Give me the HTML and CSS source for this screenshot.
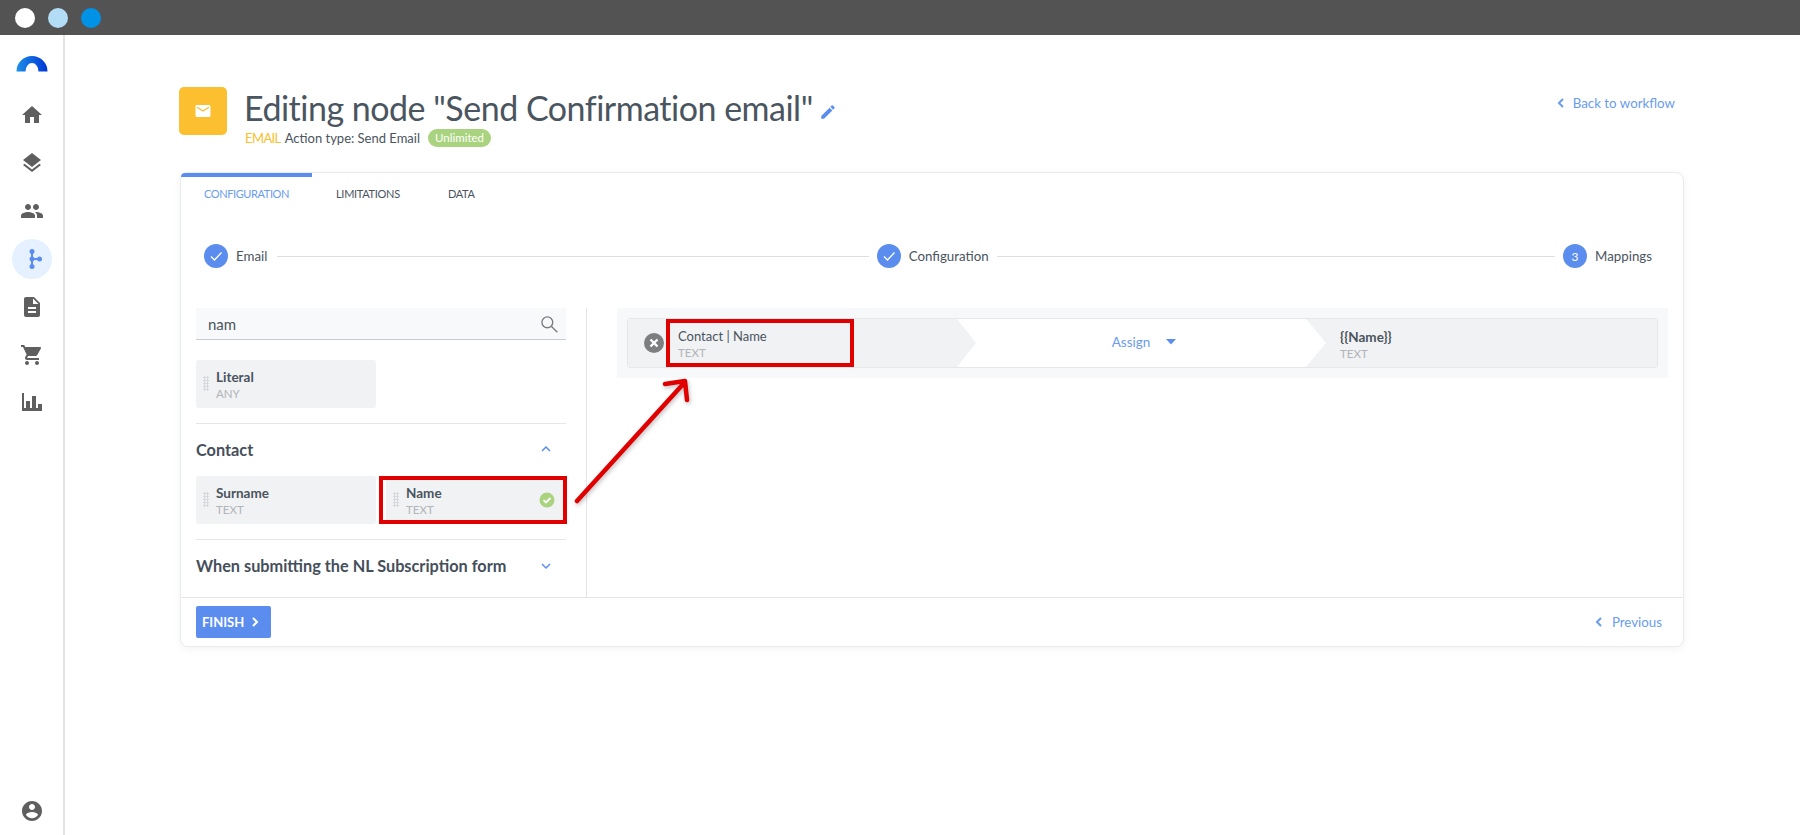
FILE: index.html
```html
<!DOCTYPE html>
<html lang="en">
<head>
    <meta charset="UTF-8">
    <title>Editing node</title>
    <link rel="stylesheet" href="styles.css">
</head>
<body>
    <div class="window-bar">
        <span class="dot dot-white"></span>
        <span class="dot dot-light"></span>
        <span class="dot dot-blue"></span>
    </div>
    <div class="app">
        <nav class="sidebar">
            <div class="logo">
                <svg width="32" height="17" viewBox="0 0 32 17">
                    <defs>
                        <linearGradient id="logoGrad" x1="0" x2="1" y1="0" y2="0">
                            <stop offset="0" stop-color="#1d8fe8"/>
                            <stop offset="1" stop-color="#0036d6"/>
                        </linearGradient>
                    </defs>
                    <path fill="url(#logoGrad)" d="M0.5 16.5A15.5 15.5 0 0 1 31.500 16.500H22.500A6.500 8.500 0 0 0 9.500 16.500Z"/>
                </svg>
            </div>
            <a class="nav-item"><svg viewBox="0 0 24 24"><path d="M10 20v-6h4v6h5v-8h3L12 3 2 12h3v8z"/></svg></a>
            <a class="nav-item"><svg viewBox="0 0 24 24"><path d="M11.990 18.540l-7.370-5.730L3 14.070l9 7 9-7-1.630-1.270-7.380 5.740zM12 16l7.360-5.730L21 9l-9-7-9 7 1.630 1.270L12 16z"/></svg></a>
            <a class="nav-item"><svg viewBox="0 0 24 24"><path d="M16 11c1.660 0 2.990-1.340 2.990-3S17.660 5 16 5c-1.660 0-3 1.340-3 3s1.340 3 3 3zm-8 0c1.660 0 2.990-1.340 2.990-3S9.660 5 8 5C6.340 5 5 6.340 5 8s1.340 3 3 3zm0 2c-2.330 0-7 1.170-7 3.500V19h14v-2.500c0-2.330-4.670-3.500-7-3.500zm8 0c-.29 0-.62.02-.97.05 1.160.84 1.970 1.970 1.970 3.450V19h6v-2.500c0-2.330-4.670-3.500-7-3.500z"/></svg></a>
            <a class="nav-item nav-active">
                <span class="nav-circle">
                    <svg viewBox="0 0 24 24"><path class="flow-line" d="M12 4v16M12 12h8"/><circle cx="12" cy="4.500" r="2.500"/><circle cx="12" cy="12" r="2.500"/><circle cx="12" cy="19.500" r="2.500"/><circle cx="19.500" cy="12" r="2.500"/></svg>
                </span>
            </a>
            <a class="nav-item"><svg viewBox="0 0 24 24"><path d="M14 2H6c-1.100 0-1.990.9-1.990 2L4 20c0 1.100.89 2 1.990 2H18c1.100 0 2-.9 2-2V8l-6-6zm2 16H8v-2h8v2zm0-4H8v-2h8v2zm-3-5V3.500L18.500 9H13z"/></svg></a>
            <a class="nav-item"><svg viewBox="0 0 24 24"><path d="M7 18c-1.100 0-1.990.9-1.990 2S5.900 22 7 22s2-.9 2-2-.9-2-2-2zM1 2v2h2l3.600 7.590-1.350 2.450c-.16.28-.25.61-.25.96 0 1.100.9 2 2 2h12v-2H7.420c-.14 0-.25-.11-.25-.25l.03-.12.9-1.630h7.450c.75 0 1.410-.41 1.750-1.030l3.580-6.490c.08-.14.12-.31.12-.48 0-.55-.45-1-1-1H5.210l-.94-2H1zm16 16c-1.100 0-1.990.9-1.990 2s.89 2 1.990 2 2-.9 2-2-.9-2-2-2z"/></svg></a>
            <a class="nav-item"><svg viewBox="0 0 24 24"><path d="M2 2h2v15h2v-7h4v7h2V5h4v12h2v-4h4v7H2z"/></svg></a>
            <a class="nav-item nav-account"><svg viewBox="0 0 24 24"><path d="M12 2C6.480 2 2 6.480 2 12s4.480 10 10 10 10-4.480 10-10S17.520 2 12 2zm0 3c1.660 0 3 1.340 3 3s-1.340 3-3 3-3-1.340-3-3 1.340-3 3-3zm0 14.200c-2.500 0-4.710-1.280-6-3.220.03-1.990 4-3.080 6-3.080 1.990 0 5.970 1.090 6 3.080-1.290 1.940-3.500 3.220-6 3.220z"/></svg></a>
        </nav>

        <main class="main">
            <header class="page-head">
                <div class="node-icon">
                    <svg viewBox="0 0 24 24"><path d="M20 4H4c-1.100 0-1.990.9-1.990 2L2 18c0 1.100.9 2 2 2h16c1.100 0 2-.9 2-2V6c0-1.100-.9-2-2-2zm0 4l-8 5-8-5V6l8 5 8-5v2z"/></svg>
                </div>
                <div class="head-text">
                    <h1 class="title">Editing node "Send Confirmation email"
                        <svg class="pencil" viewBox="0 0 24 24"><path d="M3 17.250V21h3.750L17.810 9.940l-3.750-3.750L3 17.250zM20.710 7.040c.39-.39.39-1.020 0-1.410l-2.340-2.340c-.39-.39-1.020-.39-1.410 0l-1.830 1.830 3.750 3.750 1.830-1.830z"/></svg>
                    </h1>
                    <div class="subtitle">
                        <span class="type-name">EMAIL</span>
                        <span>Action type: Send Email</span>
                        <span class="badge">Unlimited</span>
                    </div>
                </div>
                <a class="back-link">
                    <svg class="chev" viewBox="0 0 10 12"><path d="M7 2L3 6l4 4"/></svg>
                    Back to workflow
                </a>
            </header>

            <section class="card">
                <div class="tabs">
                    <div class="tab tab-active">CONFIGURATION</div>
                    <div class="tab">LIMITATIONS</div>
                    <div class="tab">DATA</div>
                </div>

                <div class="stepper">
                    <div class="step">
                        <span class="step-num"><svg viewBox="0 0 24 24"><path d="M7 12.500l3.500 3.500L17.500 8.500"/></svg></span>
                        <span>Email</span>
                    </div>
                    <div class="step-line line-a"></div>
                    <div class="step">
                        <span class="step-num"><svg viewBox="0 0 24 24"><path d="M7 12.500l3.500 3.500L17.500 8.500"/></svg></span>
                        <span>Configuration</span>
                    </div>
                    <div class="step-line line-b"></div>
                    <div class="step">
                        <span class="step-num">3</span>
                        <span>Mappings</span>
                    </div>
                </div>

                <div class="workspace">
                    <div class="fields">
                        <div class="search">
                            <span>nam</span>
                            <svg viewBox="0 0 24 24"><circle cx="10" cy="10" r="6.500"/><path d="M15 15l7 7"/></svg>
                        </div>
                        <div class="chip-row">
                            <div class="chip">
                                <span class="grip"></span>
                                <div>
                                    <div class="chip-name">Literal</div>
                                    <div class="chip-type">ANY</div>
                                </div>
                            </div>
                        </div>
                        <div class="group-title">
                            <span>Contact</span>
                            <svg class="toggle" viewBox="0 0 12 8"><path d="M2 6l4-4 4 4"/></svg>
                        </div>
                        <div class="chip-row">
                            <div class="chip">
                                <span class="grip"></span>
                                <div>
                                    <div class="chip-name">Surname</div>
                                    <div class="chip-type">TEXT</div>
                                </div>
                            </div>
                            <div class="picked">
                                <div class="chip">
                                    <span class="grip"></span>
                                    <div>
                                        <div class="chip-name">Name</div>
                                        <div class="chip-type">TEXT</div>
                                    </div>
                                    <svg class="used" viewBox="0 0 16 16"><circle cx="8" cy="8" r="7.500"/><path d="M4.500 8.200l2.500 2.300 4.500-4.500"/></svg>
                                </div>
                            </div>
                        </div>
                        <div class="group-title group-next">
                            <span>When submitting the NL Subscription form</span>
                            <svg class="toggle" viewBox="0 0 12 8"><path d="M2 2l4 4 4-4"/></svg>
                        </div>
                    </div>

                    <div class="mappings">
                        <div class="map-band">
                            <div class="map-row">
                                <div class="map-source">
                                    <svg class="remove" viewBox="0 0 20 20"><circle cx="10" cy="10" r="10"/><path d="M6.500 6.500l7 7M13.500 6.500l-7 7"/></svg>
                                    <div class="source-box">
                                        <div class="source-name">Contact | Name</div>
                                        <div class="chip-type">TEXT</div>
                                    </div>
                                </div>
                                <div class="map-action">
                                    <span>Assign</span>
                                    <svg class="caret" viewBox="0 0 10 6"><path d="M0 0h10L5 5.500z"/></svg>
                                </div>
                                <div class="map-target">
                                    <div class="chip-name">{{Name}}</div>
                                    <div class="chip-type">TEXT</div>
                                </div>
                            </div>
                        </div>
                    </div>
                </div>

                <footer class="card-foot">
                    <button class="finish">FINISH <svg class="chev" viewBox="0 0 10 12"><path d="M3 2l4 4-4 4"/></svg></button>
                    <a class="prev-link">
                        <svg class="chev" viewBox="0 0 10 12"><path d="M7 2L3 6l4 4"/></svg>
                        Previous
                    </a>
                </footer>
            </section>
        </main>
    </div>

    <!-- red callout drawn over the page -->
    <svg class="callout" viewBox="0 0 1800 835">
        <path d="M577 501L685 382M665 384L685 381L687 400"/>
    </svg>
</body>
</html>
```

FILE: styles.css
```css
* {
    box-sizing: border-box;
}
html, body {
    height: 100%;
}
body {
    margin: 0;
    overflow: hidden;
    position: relative;
    background: #fff;
    color: #4a545e;
    font-family: Lato, "Noto Sans", sans-serif;
    font-size: 14px;
}
svg {
    display: block;
}

.window-bar {
    height: 35px;
    background: #535353;
    display: flex;
    align-items: center;
    gap: 13px;
    padding-left: 15px;
}
.dot {
    width: 20px;
    height: 20px;
    border-radius: 50%;
}
.dot-white { background: #fff; }
.dot-light { background: #b3dcf6; }
.dot-blue { background: #0092e6; }

.app {
    display: flex;
    height: 800px;
}

.sidebar {
    width: 65px;
    flex-shrink: 0;
    border-right: 2px solid #e4e4e4;
    display: flex;
    flex-direction: column;
    align-items: stretch;
}
.logo {
    height: 56px;
    padding: 20px 0 0 16px;
}
.nav-item {
    height: 48px;
    display: flex;
    align-items: center;
    justify-content: center;
    padding-left: 1px;
}
.nav-item svg {
    width: 24px;
    height: 24px;
    fill: #5f5f5f;
}
.nav-circle {
    width: 40px;
    height: 40px;
    border-radius: 50%;
    background: #e5f1fe;
    display: flex;
    align-items: center;
    justify-content: center;
}
.nav-active svg {
    fill: #5b8def;
}
.flow-line {
    fill: none;
    stroke: #5b8def;
    stroke-width: 2;
}
.nav-account {
    margin-top: auto;
}

.main {
    flex: 1;
    padding: 52px 0 0 115px;
    width: 1504px;
}

.page-head {
    display: flex;
    width: 1504px;
    height: 60px;
}
.node-icon {
    width: 48px;
    height: 48px;
    border-radius: 5px;
    background: #fbbf2f;
    display: flex;
    align-items: center;
    justify-content: center;
    margin-left: -1px;
}
.node-icon svg {
    width: 18px;
    height: 18px;
    fill: #fff;
}
.head-text {
    margin-left: 17px;
}
.title {
    margin: 0;
    font-size: 34px;
    letter-spacing: -0.5px;
    line-height: 41px;
    font-weight: 400;
    color: #4a5560;
    display: flex;
    align-items: center;
}
.pencil {
    width: 18px;
    height: 18px;
    fill: #5b8def;
    margin: 8px 0 0 6px;
}
.subtitle {
    display: flex;
    align-items: center;
    height: 19px;
    gap: 4px;
    font-size: 13px;
    padding-left: 1px;
}
.type-name {
    color: #fbbf2f;
    letter-spacing: -0.6px;
}
.badge {
    margin-left: 4px;
    height: 18px;
    line-height: 18px;
    padding: 0 7px;
    border-radius: 9px;
    background: #a9d37e;
    color: #fff;
    font-size: 11.500px;
}
.back-link, .prev-link {
    color: #6a9cf0;
    display: flex;
    align-items: center;
    gap: 7px;
    font-size: 13.300px;
}
.back-link {
    margin-left: auto;
    height: 18px;
    margin-top: 7px;
    margin-right: 9px;
}
.chev {
    width: 10px;
    height: 12px;
    fill: none;
    stroke: currentColor;
    stroke-width: 2;
}

.card {
    width: 1504px;
    height: 475px;
    margin-top: 25px;
    border: 1px solid #e9ebed;
    border-radius: 8px;
    box-shadow: 0 2px 8px rgba(0, 0, 0, 0.05);
    background: #fff;
    display: flex;
    flex-direction: column;
}

.tabs {
    display: flex;
    height: 38px;
}
.tab {
    padding: 0 24px;
    line-height: 34px;
    border-top: 4px solid transparent;
    font-size: 11px;
    letter-spacing: -0.3px;
    color: #4a545e;
}
.tab-active {
    color: #6a9cf0;
    border-top-color: #5b8def;
    border-radius: 4px 0 4px 0;
    width: 131px;
    padding-left: 23px;
    letter-spacing: -0.4px;
}

.stepper {
    display: flex;
    align-items: center;
    height: 24px;
    margin-top: 33px;
    padding: 0 31px 0 23px;
    font-size: 13.300px;
}
.step {
    display: flex;
    align-items: center;
    gap: 8px;
}
.step-num {
    width: 24px;
    height: 24px;
    border-radius: 50%;
    background: #5b8def;
    color: #fff;
    font-size: 12px;
    display: flex;
    align-items: center;
    justify-content: center;
}
.step-num svg {
    width: 24px;
    height: 24px;
    fill: none;
    stroke: #fff;
    stroke-width: 1.300;
}
.step-line {
    height: 1px;
    background: #dcdee0;
    margin: 0 8px;
}
.line-a { flex: 592; margin-left: 10px; }
.line-b { flex: 559; }

.workspace {
    display: flex;
    height: 290px;
    margin-top: 40px;
    border-bottom: 1px solid #e4e5e7;
}
.fields {
    width: 406px;
    flex-shrink: 0;
    padding: 0 20px 0 15px;
    border-right: 1px solid #e4e5e7;
}
.search {
    height: 32px;
    background: #f8f9fa;
    border-bottom: 1px solid #c9ced4;
    display: flex;
    align-items: center;
    justify-content: space-between;
    padding: 0 7px 0 12px;
    font-size: 15px;
}
.search svg {
    width: 20px;
    height: 20px;
    fill: none;
    stroke: #767b80;
    stroke-width: 1.600;
}
.chip-row {
    display: grid;
    grid-template-columns: 180px 188px;
    column-gap: 3px;
    margin-top: 20px;
    padding-bottom: 15px;
    border-bottom: 1px solid #e4e5e7;
}
.group-title + .chip-row {
    margin-top: 0;
}
.chip {
    height: 48px;
    background: #f1f2f4;
    border-radius: 3px;
    display: flex;
    align-items: flex-start;
    padding: 9px 0 0 7px;
    position: relative;
}
.grip {
    width: 6px;
    height: 15px;
    margin: 7px 7px 0 0;
    background-image: radial-gradient(circle, #d6d8db 1px, transparent 1.200px);
    background-size: 3px 3px;
}
.chip-name {
    font-size: 13.500px;
    font-weight: 700;
    line-height: 16px;
    color: #4a545e;
}
.chip-type {
    font-size: 11.500px;
    line-height: 16px;
    margin-top: 1px;
    color: #b1b4b8;
}
.picked {
    width: 188px;
    height: 48px;
    border: 4px solid #e00000;
    padding-left: 3px;
    background: #fff;
}
.picked .chip {
    height: 40px;
    border-radius: 0;
    padding-top: 5px;
}
.used {
    width: 16px;
    height: 16px;
    margin: 7px 8px 0 auto;
    fill: #a9d37e;
    stroke: none;
}
.used path {
    fill: none;
    stroke: #fff;
    stroke-width: 1.800;
}
.group-title {
    height: 52px;
    display: flex;
    align-items: center;
    justify-content: space-between;
    padding: 0 14px 2px 0;
    font-size: 16.300px;
    font-weight: 700;
    color: #454f5a;
}
.group-next {
    height: 50px;
    padding: 1px 14px 0 0;
}
.toggle {
    width: 12px;
    height: 8px;
    fill: none;
    stroke: #5b8def;
    stroke-width: 1.500;
}

.mappings {
    flex: 1;
    padding: 0 15px 0 30px;
}
.map-band {
    background: #f7f8f9;
    padding: 10px;
    height: 70px;
}
.map-row {
    display: flex;
    height: 50px;
    background: #fff;
    border: 1px solid #e5e7ea;
    border-radius: 3px;
}
.map-source {
    width: 348px;
    flex-shrink: 0;
    background: #f1f2f4;
    clip-path: polygon(0 0, 329px 0, 100% 50%, 329px 100%, 0 100%);
    display: flex;
    align-items: center;
    padding-left: 16px;
}
.remove {
    width: 20px;
    height: 20px;
    fill: #7c7e80;
    flex-shrink: 0;
}
.remove path {
    fill: none;
    stroke: #fff;
    stroke-width: 2.400;
}
.source-box {
    width: 188px;
    height: 48px;
    margin-left: 2px;
    border: 4px solid #e00000;
    padding: 5px 0 0 8px;
}
.source-name {
    font-size: 13px;
    line-height: 16px;
}
.map-action {
    flex: 1;
    display: flex;
    align-items: center;
    justify-content: center;
    gap: 16px;
    color: #6a9cf0;
    font-size: 13.500px;
    padding: 0 0 2px 6px;
}
.caret {
    width: 10px;
    height: 6px;
    fill: #5b8def;
}
.map-target {
    width: 351px;
    flex-shrink: 0;
    background: #f1f2f4;
    clip-path: polygon(0 0, 100% 0, 100% 100%, 0 100%, 20px 50%);
    padding: 10px 0 0 34px;
}

.card-foot {
    flex: 1;
    display: flex;
    align-items: center;
    justify-content: space-between;
    padding: 0 21px 0 15px;
}
.finish {
    height: 32px;
    width: 75px;
    border: none;
    border-radius: 2px;
    background: #5b8def;
    color: #fff;
    font-family: Lato, "Noto Sans", sans-serif;
    font-size: 13px;
    font-weight: 700;
    display: flex;
    align-items: center;
    gap: 6px;
    padding: 0 0 0 6px;
}
.prev-link {
    gap: 8px;
}

.callout {
    position: absolute;
    left: 0;
    top: 0;
    width: 1800px;
    height: 835px;
    fill: none;
    stroke: #e00000;
    stroke-width: 4.500;
    stroke-linecap: round;
    stroke-linejoin: round;
    pointer-events: none;
    filter: drop-shadow(1px 2px 2px rgba(0, 0, 0, 0.25));
}
```
